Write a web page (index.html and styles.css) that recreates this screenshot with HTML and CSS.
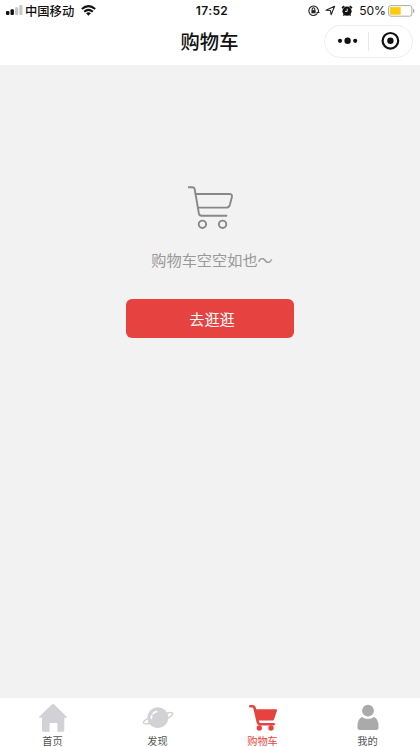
FILE: index.html
```html
<!DOCTYPE html>
<html lang="zh-CN">
<head>
<meta charset="utf-8">
<meta name="viewport" content="width=device-width, initial-scale=1">
<title>购物车</title>
<link rel="stylesheet" href="styles.css">
</head>
<body>
<div class="app">
  <header class="header">
    <div class="status">
      <div class="status-left">
        <svg class="signal" width="17" height="11" viewBox="0 0 17 11">
          <rect x="0" y="6" width="3.4" height="4" rx="1" fill="#111"/>
          <rect x="4.5" y="4.2" width="3.4" height="5.8" rx="1" fill="#111"/>
          <rect x="9" y="2.2" width="3.2" height="7.8" rx="1" fill="#c8c8c8"/>
          <rect x="13.3" y="0" width="3.2" height="10" rx="1" fill="#c8c8c8"/>
        </svg>
        <span class="carrier">中国移动</span>
        <svg class="wifi" width="15" height="11" viewBox="0 0 15 11" fill="none" stroke="#111" stroke-width="2">
          <path d="M.8 4.1Q7.5-1.9 14.2 4.1M3.2 6.7Q7.5 3 11.8 6.7"/>
          <path d="M5.1 8.2Q7.5 6.4 9.9 8.2L7.5 10.7Z" fill="#111" stroke="none"/>
        </svg>
      </div>
      <time class="clock">17:52</time>
      <div class="status-right">
        <svg class="lock" width="12" height="12" viewBox="0 0 12 12" fill="none" stroke="#222" stroke-width="1.1">
          <path d="M9.5 8.3A4.7 4.7 0 1 1 10 4.2M8.5 7.5h3M10.4 4.2v2.8"/>
          <rect x="3.4" y="5.1" width="4.2" height="3.2" fill="#222" stroke="none"/>
          <path d="M4.2 5.2V4.1a1.3 1.3 0 0 1 2.6 0v1.1"/>
        </svg>
        <svg class="arrow" width="11" height="11" viewBox="0 0 11 11" fill="none" stroke="#222" stroke-width="1.1" stroke-linejoin="round">
          <path d="M1 5.3 9.6 1.2 6.1 9.7 5.4 5.5Z"/>
        </svg>
        <svg class="alarm" width="12" height="12" viewBox="0 0 12 12" fill="#111">
          <circle cx="6" cy="6.2" r="4.6"/>
          <path d="M1 3 3.3 1.2M8.7 1.2l2.3 1.8M3 9.7l-.6.9M9 9.7l.6.9" stroke="#111" stroke-width="1.6"/>
          <path d="M6.2 3.7v2.7H4" fill="none" stroke="#fff" stroke-width=".9"/>
        </svg>
        <span class="percent">50%</span>
        <svg class="battery" width="27" height="12" viewBox="0 0 27 12">
          <rect x=".6" y=".6" width="23.3" height="10.6" rx="2.2" fill="#fff" stroke="#aaa"/>
          <rect x="2.1" y="2.1" width="10.6" height="7.6" fill="#ffcb0a"/>
          <path d="M25 3.8q1.5.4 1.5 2.1T25 8z" fill="#aaa"/>
        </svg>
      </div>
    </div>
    <div class="nav">
      <h1 class="title">购物车</h1>
      <div class="capsule">
        <svg width="43" height="32" viewBox="0 0 43 32" fill="#111">
          <circle cx="15" cy="15.8" r="2.1"/><circle cx="22.6" cy="15.8" r="3.2"/><circle cx="30.2" cy="15.8" r="2.1"/>
        </svg>
        <span class="divider"></span>
        <svg width="43" height="32" viewBox="0 0 43 32">
          <circle cx="21.4" cy="15.8" r="7.8" fill="none" stroke="#111" stroke-width="2.2"/>
          <circle cx="21.4" cy="15.8" r="3.2" fill="#111"/>
        </svg>
      </div>
    </div>
  </header>
  <main class="empty">
    <svg class="empty-cart" width="48" height="46" viewBox="0 0 48 46" fill="none" stroke="#888" stroke-width="1.9" stroke-linecap="round" stroke-linejoin="round">
      <path d="M2.8 2.2h3.4q2.1 0 2.5 2L12.8 28.2q.5 2.5 2.8 2.5h24.9"/>
      <path d="M9.6 9h33.7q3.1 0 2.6 2.9l-2.1 8q-.8 2.7-3.7 2.7H11.9"/>
      <circle cx="16.4" cy="39.3" r="3.7"/><circle cx="36.6" cy="39.3" r="3.7"/>
    </svg>
    <p class="empty-text">购物车空空如也～</p>
    <button class="browse" type="button">去逛逛</button>
  </main>
  <nav class="tabs">
    <a class="tab">
      <svg width="32" height="30" viewBox="0 0 32 30" fill="#d2d2d6">
        <path d="M16 1q.7 0 1.2.5L29.7 13.8q.8.9-.5.9h-1.9v12.6q0 1.4-1.4 1.4h-5.5v-8.7h-7.8v8.7H6.4Q5 28.700 5 27.300V14.700H2.700q-1.300 0-.5-.9L14.800 1.500q.5-.5 1.200-.5z"/>
      </svg>
      <span>首页</span>
    </a>
    <a class="tab">
      <svg width="32" height="30" viewBox="0 0 32 30">
        <circle cx="15.8" cy="14.7" r="10.5" fill="#d2d2d6"/>
        <path d="M24.800 10c3.800-.7 5.800-.4 6 .6.3 2-5.600 5.400-13.100 7.600S2.100 21.700 1.500 19.900c-.3-1.100 1.100-2.600 4.200-4.200" fill="none" stroke="#d2d2d6" stroke-width="1.5"/>
        <path d="M9.400 15.300q-.2-1.200.3-2.600M11.100 10.700q1.300-1.700 3.600-2.100" fill="none" stroke="#fff" stroke-width="1.700" stroke-linecap="round"/>
      </svg>
      <span>发现</span>
    </a>
    <a class="tab active">
      <svg width="32" height="30" viewBox="0 0 32 30" fill="#e64340">
        <path d="M3.300 3.300h2.200q1.700 0 2.100 1.800l3.400 14.600q.4 1.500 1.900 1.500h13.800" fill="none" stroke="#e64340" stroke-width="2.600" stroke-linecap="round" stroke-linejoin="round"/>
        <path d="M8.500 6.300h20.600q1.200 0 .9 1.200l-3 8.900q-.3 1-1.400 1H11z"/>
        <circle cx="12.300" cy="25" r="2.700"/><circle cx="24" cy="25" r="2.700"/>
      </svg>
      <span>购物车</span>
    </a>
    <a class="tab">
      <svg width="32" height="30" viewBox="0 0 32 30" fill="#aaa">
        <circle cx="16" cy="7.700" r="5.900"/>
        <path d="M9.900 14q6.100 4 12.200 0 4.300 2.200 4.400 8.800v1.900q0 2.300-2.300 2.300H7.800q-2.300 0-2.300-2.300v-1.900q.1-6.600 4.400-8.800z"/>
      </svg>
      <span>我的</span>
    </a>
  </nav>
</div>
</body>
</html>
```
FILE: styles.css
```css
* { box-sizing: border-box; }
body {
  margin: 0;
  font-family: "Noto Sans CJK SC", sans-serif;
  color: #111;
}
svg { display: block; flex: none; }
.app {
  display: flex;
  flex-direction: column;
  height: 747px;
  overflow: hidden;
  background: #f2f2f2;
}
.header { height: 65px; background: #fff; }
.status {
  display: grid;
  grid-template-columns: 1fr auto 1fr;
  align-items: center;
  height: 21px;
  padding: 0 5px 0 6px;
}
.status-left, .status-right { display: flex; align-items: center; }
.status-right { justify-content: flex-end; }
.carrier { margin-left: 2px; font-size: 12.3px; line-height: 20px; font-weight: 500; }
.wifi { margin-left: 7px; }
.clock { padding-left: 3px; font: 600 12px/20px Inter, sans-serif; letter-spacing: .4px; }
.arrow { margin-left: 5px; }
.alarm { margin-left: 5px; }
.percent { margin: 0 2px 0 6px; font: 400 12.1px/20px Inter, sans-serif; }
.nav {
  display: grid;
  grid-template-columns: 1fr auto 1fr;
  align-items: center;
  height: 40px;
  padding-right: 7px;
}
.title {
  grid-column: 2;
  margin: 0 0 0 6px;
  font-size: 19.3px;
  line-height: 40px;
  font-weight: 500;
}
.capsule {
  display: flex;
  align-items: center;
  justify-self: end;
  width: 89px;
  height: 33px;
  border: 1px solid #eee;
  border-radius: 17px;
}
.divider { width: 1px; height: 19px; background: #e8e8e8; }
.empty {
  flex: 1;
  display: flex;
  flex-direction: column;
  align-items: center;
  padding-top: 120px;
}
.empty-text {
  margin: 16px 0 0 4px;
  font-size: 15.2px;
  line-height: 24px;
  color: #999;
}
.browse {
  width: 168px;
  height: 39px;
  margin: 28px 0 0;
  padding: 0 0 2px 4px;
  border: 0;
  border-radius: 6px;
  background: #e64340;
  color: #fff;
  font: 400 15.2px/36px "Noto Sans CJK SC", sans-serif;
}
.tabs {
  display: grid;
  grid-template-columns: repeat(4, 1fr);
  height: 49px;
  background: #fff;
}
.tab {
  display: flex;
  flex-direction: column;
  align-items: center;
  padding-top: 5px;
  color: #555;
}
.tab span { margin-top: 1px; font-size: 10.2px; line-height: 14px; }
.active { color: #e64340; }
```
